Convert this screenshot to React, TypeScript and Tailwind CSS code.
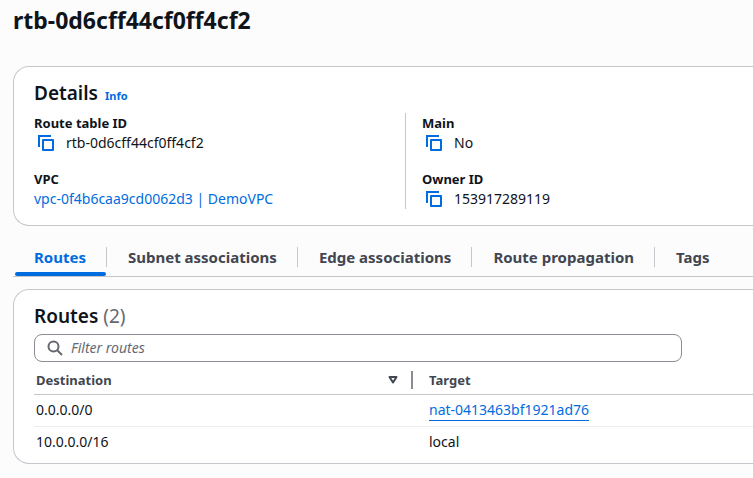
import type { ReactNode } from "react";

const tabs = [
  "Routes",
  "Subnet associations",
  "Edge associations",
  "Route propagation",
  "Tags",
];

function CopyButton({ label }: { label: string }) {
  return (
    <button type="button" aria-label={label} className="ml-1 mr-3 size-4 text-[#006ce0]">
      <svg viewBox="0 0 16 16" className="size-4" fill="none" stroke="currentColor" strokeWidth="2">
        <path d="M1 12V1h12" />
        <path d="M5 5h10v10H5z" strokeLinejoin="round" />
      </svg>
    </button>
  );
}

function Field({ label, children }: { label: string; children: ReactNode }) {
  return (
    <div>
      <dt className="h-5 text-[13px] font-bold">{label}</dt>
      <dd className="flex h-5 items-center">{children}</dd>
    </div>
  );
}

export default function App() {
  return (
    <main className="min-h-screen overflow-hidden bg-[#fcfcfd] pb-3 pl-[13px] font-['Noto_Sans',sans-serif] text-[14px] leading-5 text-[#0f141a]">
      <h1 className="pt-1 text-[23px] leading-8 font-bold">rtb-0d6cff44cf0ff4cf2</h1>

      <section className="mt-[30px] rounded-l-[16px] border-y border-l border-[#c6c6cd] bg-white pt-[14px] pb-4 pl-5">
        <div className="flex items-baseline gap-[7px]">
          <h2 className="text-[19px] leading-6 font-semibold">Details</h2>
          <a href="#info" className="text-[11px] font-bold text-[#006ce0]">
            Info
          </a>
        </div>
        <dl className="mt-[7px] grid grid-cols-[371px_1fr]">
          <div className="space-y-4">
            <Field label="Route table ID">
              <CopyButton label="Copy route table ID" />
              rtb-0d6cff44cf0ff4cf2
            </Field>
            <Field label="VPC">
              <a href="#vpc" className="text-[#006ce0]">
                vpc-0f4b6caa9cd0062d3 | DemoVPC
              </a>
            </Field>
          </div>
          <div className="space-y-4 border-l border-[#c6c6cd] pl-4">
            <Field label="Main">
              <CopyButton label="Copy main" />
              No
            </Field>
            <Field label="Owner ID">
              <CopyButton label="Copy owner ID" />
              153917289119
            </Field>
          </div>
        </dl>
      </section>

      <div role="tablist" className="mt-4 flex h-[35px] border-b border-[#c6c6cd] text-[15px]">
        {tabs.map((tab, i) => (
          <div key={tab} className="flex">
            {i > 0 && <span className="mt-[5px] h-5 w-px bg-[#c6c6cd]" />}
            <button
              type="button"
              role="tab"
              aria-selected={i === 0}
              className={
                i === 0
                  ? "relative pr-5 pb-1 pl-[21px] font-bold whitespace-nowrap text-[#006ce0] after:absolute after:right-0 after:bottom-0 after:left-0.5 after:h-1 after:rounded-full after:bg-[#006ce0]"
                  : "pr-5 pb-1 pl-[21px] font-bold whitespace-nowrap text-[#424650]"
              }
            >
              {tab}
            </button>
          </div>
        ))}
      </div>

      <section className="mt-3 rounded-l-[16px] border-y border-l border-[#c6c6cd] bg-white pt-[14px] pb-1.5 pl-5">
        <h2 className="text-[19px] leading-6 font-semibold">
          Routes <span className="font-normal text-[#656871]">(2)</span>
        </h2>
        <label className="mt-[6px] mr-[71px] flex h-7 items-center gap-2 rounded-lg border border-[#8c8c94] bg-white pl-3 text-[#656871]">
          <svg viewBox="0 0 16 16" className="size-4" fill="none" stroke="currentColor" strokeWidth="2">
            <circle cx="6.500" cy="6.500" r="5" />
            <path d="m10 10 5 5" />
          </svg>
          <input
            type="text"
            aria-label="Filter routes"
            placeholder="Filter routes"
            className="min-w-0 flex-1 outline-none placeholder:text-[#656871] placeholder:italic"
          />
        </label>
        <table className="w-full table-fixed text-left">
          <colgroup>
            <col className="w-[379px]" />
            <col />
          </colgroup>
          <thead className="text-[13px] text-[#424650]">
            <tr className="h-8 border-b border-[#c6c6cd]">
              <th className="px-0 pt-1 pb-0 pl-0.5 font-bold">
                <div className="flex items-center">
                  Destination
                  <button type="button" aria-label="Sort by destination" className="mr-[13px] ml-auto">
                    <svg viewBox="0 0 10 8" className="h-2 w-[10px]" fill="none" stroke="currentColor" strokeWidth="2">
                      <path d="M1.500 1h7L5 6.500z" strokeLinejoin="round" />
                    </svg>
                  </button>
                  <span className="h-[18px] w-0.5 bg-[#8c8c94]" />
                </div>
              </th>
              <th className="px-0 pt-1 pb-0 pl-4 font-bold">Target</th>
            </tr>
          </thead>
          <tbody>
            <tr className="h-8 border-b border-[#ebebf0]">
              <td className="p-0 pl-0.5">0.0.0.0/0</td>
              <td className="p-0 pl-4">
                <a href="#nat" className="border-b border-[#006ce0] pb-px text-[#006ce0]">
                  nat-0413463bf1921ad76
                </a>
              </td>
            </tr>
            <tr className="h-[31px]">
              <td className="p-0 pl-0.5">10.0.0.0/16</td>
              <td className="p-0 pl-4">local</td>
            </tr>
          </tbody>
        </table>
      </section>
    </main>
  );
}
